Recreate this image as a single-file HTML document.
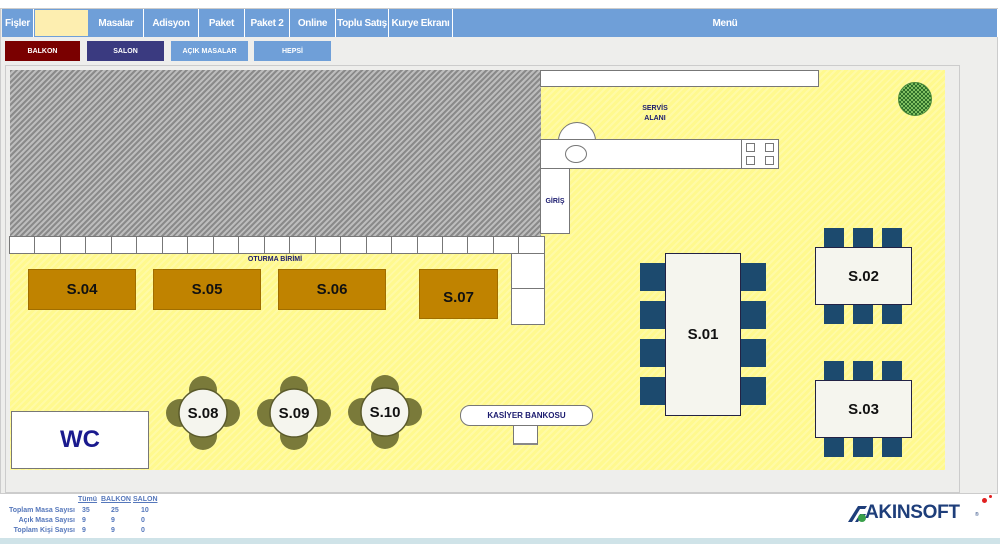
<!DOCTYPE html>
<html><head><meta charset="utf-8"><style>
*{margin:0;padding:0;box-sizing:border-box}
body{width:1000px;height:544px;background:#fff;font-family:"Liberation Sans",Arial,sans-serif;position:relative;overflow:hidden}
.a{position:absolute}
.tab{position:absolute;top:9px;height:28px;background:#6f9fd8;color:#fff;font-size:10px;font-weight:bold;display:flex;align-items:center;justify-content:center;border-right:1px solid #fff;white-space:nowrap;letter-spacing:-0.3px}
.sub{position:absolute;top:41px;height:20px;color:#fff;font-size:7px;font-weight:bold;display:flex;align-items:center;justify-content:center}
.br{position:absolute;background:#c08300;border:1px solid #a06e00;font-weight:bold;font-size:15px;display:flex;align-items:center;justify-content:center;color:#111}
.wt{position:absolute;background:#f5f5ee;border:1.5px solid #224;font-weight:bold;font-size:15px;display:flex;align-items:center;justify-content:center;color:#111}
.ch{position:absolute;background:#1c4a6e}
.cell{position:absolute;background:#fff;border:1px solid #777}
.st{position:absolute;font-size:7px;color:#5577bb;font-weight:bold}
</style></head><body>
<div class="a" style="left:0;top:8px;width:998px;height:486px;background:#eeeeec;border:1px solid #ccc"></div>
<div class="tab" style="left:2px;width:32px">Fişler</div>
<div class="tab" style="left:34px;width:55px;background:#fdeeb0;border:1px solid #6f9fd8"></div>
<div class="tab" style="left:89px;width:55px">Masalar</div>
<div class="tab" style="left:144px;width:55px">Adisyon</div>
<div class="tab" style="left:199px;width:46px">Paket</div>
<div class="tab" style="left:245px;width:45px">Paket 2</div>
<div class="tab" style="left:290px;width:46px">Online</div>
<div class="tab" style="left:336px;width:53px">Toplu Satış</div>
<div class="tab" style="left:389px;width:64px">Kurye Ekranı</div>
<div class="tab" style="left:453px;width:545px">Menü</div>
<div class="sub" style="left:5px;width:75px;background:#7a0000">BALKON</div>
<div class="sub" style="left:87px;width:77px;background:#3a3a80">SALON</div>
<div class="sub" style="left:171px;width:77px;background:#6f9fd8">AÇIK MASALAR</div>
<div class="sub" style="left:254px;width:77px;background:#6f9fd8">HEPSİ</div>
<div class="a" style="left:5px;top:65px;width:955px;height:428px;border:1px solid #ccc"></div>
<div class="a" style="left:10px;top:70px;width:935px;height:400px;background:repeating-linear-gradient(135deg,#fff98e 0 3px,#fffaa6 3px 5px)"></div>
<div class="a" style="left:10px;top:70px;width:531px;height:166px;background:repeating-linear-gradient(135deg,#8a8a8a 0 2px,#bdbdbd 2px 4px)"></div>
<div class="a" style="left:10px;top:236px;width:535px;height:18px;display:flex">
<script>for(let i=0;i<21;i++)document.write('<div style="flex:1;background:#fff;border:1px solid #777;margin-left:-1px"></div>')</script>
</div>
<div class="cell" style="left:511px;top:253px;width:34px;height:36px"></div>
<div class="cell" style="left:511px;top:288px;width:34px;height:37px"></div>
<div class="a" style="left:230px;top:256px;width:90px;text-align:center;font-size:7px;font-weight:bold;color:#1a1a6e">OTURMA BİRİMİ</div>
<div class="br" style="left:28px;top:269px;width:108px;height:41px">S.04</div>
<div class="br" style="left:153px;top:269px;width:108px;height:41px">S.05</div>
<div class="br" style="left:278px;top:269px;width:108px;height:41px">S.06</div>
<div class="br" style="left:419px;top:269px;width:79px;height:50px;padding-top:6px">S.07</div>
<div class="cell" style="left:540px;top:70px;width:279px;height:17px"></div>
<div class="a" style="left:620px;top:104px;width:70px;text-align:center;font-size:7px;font-weight:bold;color:#1a1a6e;line-height:10px">SERVİS<br>ALANI</div>
<div class="a" style="left:558px;top:122px;width:38px;height:38px;border-radius:50%;background:#fff;border:1px solid #777"></div>
<div class="cell" style="left:540px;top:139px;width:239px;height:30px"></div>
<div class="cell" style="left:741px;top:139px;width:38px;height:30px"></div>
<div class="cell" style="left:746px;top:143px;width:9px;height:9px"></div><div class="cell" style="left:765px;top:143px;width:9px;height:9px"></div>
<div class="cell" style="left:746px;top:156px;width:9px;height:9px"></div><div class="cell" style="left:765px;top:156px;width:9px;height:9px"></div>
<div class="a" style="left:565px;top:145px;width:22px;height:18px;border-radius:50%;background:#fff;border:1px solid #777"></div>
<div class="cell" style="left:540px;top:168px;width:30px;height:66px;display:flex;align-items:center;justify-content:center;font-size:7px;font-weight:bold;color:#1a1a6e">GİRİŞ</div>
<div class="a" style="left:898px;top:82px;width:34px;height:34px;border-radius:50%;border:1px solid #4a8a3a;background:repeating-conic-gradient(#2f6f2a 0 25%,#7fc060 0 50%) 0 0/4px 4px"></div>
<div class="ch" style="left:640px;top:263px;width:26px;height:28px"></div><div class="ch" style="left:640px;top:301px;width:26px;height:28px"></div>
<div class="ch" style="left:640px;top:339px;width:26px;height:28px"></div><div class="ch" style="left:640px;top:377px;width:26px;height:28px"></div>
<div class="ch" style="left:740px;top:263px;width:26px;height:28px"></div><div class="ch" style="left:740px;top:301px;width:26px;height:28px"></div>
<div class="ch" style="left:740px;top:339px;width:26px;height:28px"></div><div class="ch" style="left:740px;top:377px;width:26px;height:28px"></div>
<div class="wt" style="left:665px;top:253px;width:76px;height:163px">S.01</div>
<div class="ch" style="left:824px;top:228px;width:20px;height:96px"></div><div class="ch" style="left:853px;top:228px;width:20px;height:96px"></div><div class="ch" style="left:882px;top:228px;width:20px;height:96px"></div>
<div class="wt" style="left:815px;top:247px;width:97px;height:58px">S.02</div>
<div class="ch" style="left:824px;top:361px;width:20px;height:96px"></div><div class="ch" style="left:853px;top:361px;width:20px;height:96px"></div><div class="ch" style="left:882px;top:361px;width:20px;height:96px"></div>
<div class="wt" style="left:815px;top:380px;width:97px;height:58px">S.03</div>
<svg class="a" style="left:0;top:0" width="1000" height="544">
<g fill="#7a7a3a">
<circle cx="203" cy="390" r="14"/><circle cx="203" cy="436" r="14"/><circle cx="180" cy="413" r="14"/><circle cx="226" cy="413" r="14"/>
<circle cx="294" cy="390" r="14"/><circle cx="294" cy="436" r="14"/><circle cx="271" cy="413" r="14"/><circle cx="317" cy="413" r="14"/>
<circle cx="385" cy="389" r="14"/><circle cx="385" cy="435" r="14"/><circle cx="362" cy="412" r="14"/><circle cx="408" cy="412" r="14"/>
</g>
<g fill="#f5f5ee" stroke="#5a5a2a" stroke-width="1.5">
<circle cx="203" cy="413" r="24"/><circle cx="294" cy="413" r="24"/><circle cx="385" cy="412" r="24"/></g>
<g font-family="Liberation Sans" font-weight="bold" font-size="15" text-anchor="middle" fill="#111">
<text x="203" y="418">S.08</text><text x="294" y="418">S.09</text><text x="385" y="417">S.10</text></g>
</svg>
<div class="cell" style="left:513px;top:425px;width:25px;height:20px;border-bottom:2px solid #888"></div>
<div class="a" style="left:460px;top:405px;width:133px;height:21px;background:#fff;border:1px solid #777;border-radius:10px;font-size:8px;font-weight:bold;color:#1a1a6e;display:flex;align-items:center;justify-content:center">KASİYER BANKOSU</div>
<div class="a" style="left:11px;top:411px;width:138px;height:58px;background:#fff;border:1px solid #777;font-size:24px;font-weight:bold;color:#1a1a8e;display:flex;align-items:center;justify-content:center">WC</div>
<div class="a" style="left:0;top:494px;width:998px;height:44px;background:#fff"></div>
<div class="st" style="left:78px;top:496px;text-decoration:underline">Tümü</div>
<div class="st" style="left:101px;top:496px;text-decoration:underline">BALKON</div>
<div class="st" style="left:133px;top:496px;text-decoration:underline">SALON</div>
<div class="st" style="left:8px;top:506px;line-height:10px;text-align:right;width:67px">Toplam Masa Sayısı<br>Açık Masa Sayısı<br>Toplam Kişi Sayısı</div>
<div class="st" style="left:82px;top:506px;line-height:10px">35<br>9<br>9</div>
<div class="st" style="left:111px;top:506px;line-height:10px">25<br>9<br>9</div>
<div class="st" style="left:141px;top:506px;line-height:10px">10<br>0<br>0</div>
<div class="a" style="left:0;top:538px;width:1000px;height:6px;background:#cfe3e8"></div>
<svg class="a" style="left:846px;top:505px" width="22" height="18"><path d="M2 17 L12 1 H21 L19 4 H14 L6 17Z M9 17 L14 9 H20 L18 12 H15 L12 17Z" fill="#1e3e7a"/><circle cx="16" cy="13" r="4" fill="#3aa04a"/></svg>
<div class="a" style="left:865px;top:502px;font-size:19px;font-weight:bold;color:#1e3e7a;letter-spacing:-0.3px">AKINSOFT</div>
<div class="a" style="left:975px;top:512px;font-size:5px;color:#1e3e7a">®</div>
<div class="a" style="left:982px;top:498px;width:5px;height:5px;background:#e02020;border-radius:50%"></div>
<div class="a" style="left:989px;top:495px;width:3px;height:3px;background:#e02020;border-radius:50%"></div>
</body></html>
